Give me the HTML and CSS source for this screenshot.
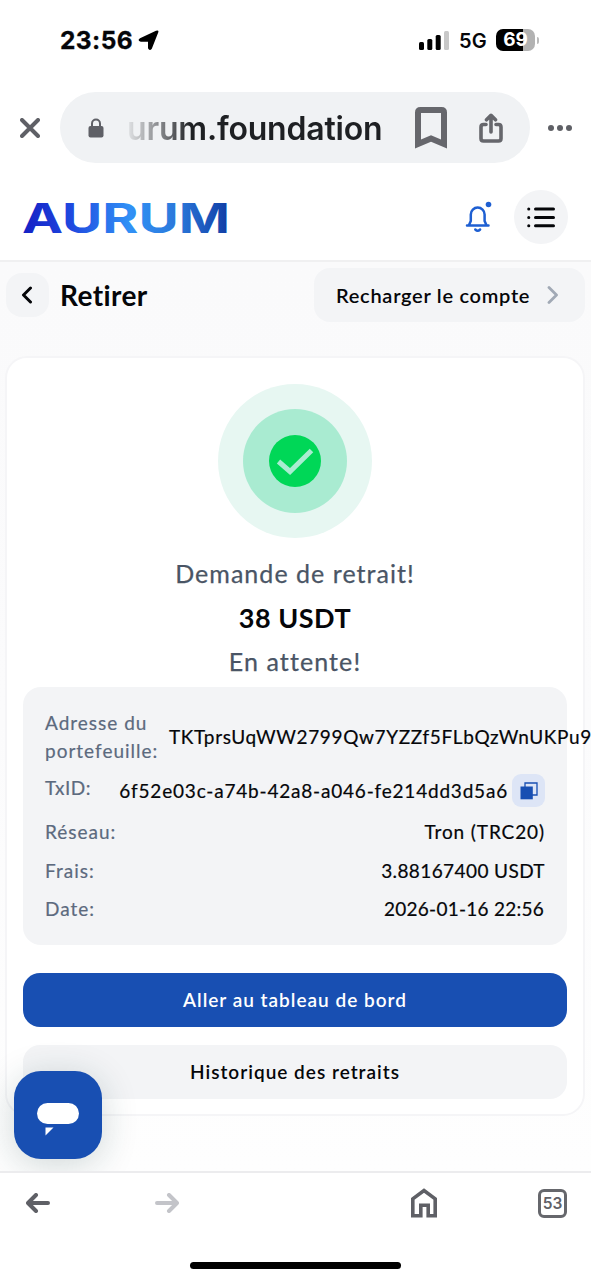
FILE: index.html
```html
<!DOCTYPE html>
<html lang="fr">
<head>
<meta charset="utf-8">
<meta name="viewport" content="width=device-width, initial-scale=1">
<title>Retirer</title>
<link rel="stylesheet" href="styles.css">
</head>
<body>
<div class="status">
  <div class="status-left">
    <span class="clock">23:56</span>
    <svg width="21" height="21" viewBox="0 0 21 21"><path d="M2 8.200 18 .8Q21.200 -.2 20.200 2.600L13.800 18.800Q11.500 21.500 10 18.200V11.800H2.800Q-1.200 10.600 2 8.200Z"/></svg>
  </div>
  <div class="status-right">
    <svg class="signal" width="30" height="19" viewBox="0 0 30 19"><rect x="0" y="11" width="5" height="8" rx="1.500"/><rect x="8.300" y="8" width="5" height="11" rx="1.500"/><rect x="16.700" y="4" width="5" height="15" rx="1.500"/><rect x="25" y="0" width="5" height="19" rx="1.500" fill="#c8c8c8"/></svg>
    <span class="net">5G</span>
    <span class="battery">69</span><span class="battery-tip"></span>
  </div>
</div>

<div class="browser">
  <svg class="close" width="20" height="20" viewBox="0 0 20 20"><path d="M2 2 18 18M18 2 2 18"/></svg>
  <div class="address">
    <svg class="lock" width="16" height="20" viewBox="0 0 16 20"><rect x=".5" y="8" width="15" height="11.500" rx="2"/><path d="M4 9V5.500a4 4 0 0 1 8 0V9" fill="none" stroke="#5f6066" stroke-width="2"/></svg>
    <span class="url">urum.foundation</span>
    <svg class="bookmark" width="32" height="42" viewBox="0 0 32 42"><path d="M3 37V5.500Q3 3 5.500 3h21Q29 3 29 5.500V37L16 31.500Z"/></svg>
    <svg class="share" width="24" height="30" viewBox="0 0 24 30"><path d="M7 11.500H4.500Q2 11.500 2 14v11.500Q2 28 4.500 28h15q2.500 0 2.500-2.500V14q0-2.500-2.500-2.500H17M12 19V3M7.500 6.800 12 2.300l4.500 4.500"/></svg>
  </div>
  <span class="more"><i></i><i></i><i></i></span>
</div>

<header class="header">
  <svg class="logo" width="210" height="54" viewBox="0 0 210 54" role="img">
    <defs><linearGradient id="brand" x1="0" x2="1" y1="0" y2="0"><stop offset="0" stop-color="#1420c4"/><stop offset=".22" stop-color="#1e45de"/><stop offset=".52" stop-color="#3191f6"/><stop offset=".75" stop-color="#2b78da"/><stop offset="1" stop-color="#103ca4"/></linearGradient></defs>
    <text x="0" y="42.500" textLength="208" lengthAdjust="spacingAndGlyphs" fill="url(#brand)">AURUM</text>
  </svg>
  <svg class="bell" width="30" height="34" viewBox="0 0 30 34"><path d="M3 25.500h21.500M5 25l1.800-4v-6.500a6.900 6.900 0 0 1 13.800 0V21l1.800 4M11.300 29.500q2.400 2.400 4.800 0"/><circle cx="24.500" cy="4.500" r="2.800"/></svg>
  <span class="menu"><svg width="28" height="21" viewBox="0 0 28 21"><path d="M8.500 2H26.500M8.500 10.500H26.500M8.500 18.700H26.500M1.700 2h.1M1.700 10.500h.1M1.700 18.700h.1"/></svg></span>
</header>

<main class="page">
  <div class="title-row">
    <span class="back"><svg width="12" height="18" viewBox="0 0 12 18"><path d="M9.500 2 2.500 9l7 7"/></svg></span>
    <h1 class="title">Retirer</h1>
    <a class="topup"><span>Recharger le compte</span><svg width="12" height="18" viewBox="0 0 12 18"><path d="M2 1.500 9.500 9 2 16.500"/></svg></a>
  </div>

  <section class="card">
    <div class="halo"><div class="ring"><svg width="52" height="52" viewBox="0 0 52 52"><circle cx="26" cy="26" r="26" fill="#00d757"/><path d="M9.500 26.500 21 36.500 42.500 15.500" fill="none" stroke="#a9ecd1" stroke-width="5"/></svg></div></div>
    <p class="lead request">Demande de retrait!</p>
    <p class="amount">38 USDT</p>
    <p class="lead pending">En attente!</p>
    <dl class="details">
      <div class="row wallet"><dt>Adresse du portefeuille:</dt><dd>TKTprsUqWW2799Qw7YZZf5FLbQzWnUKPu9</dd></div>
      <div class="row tx"><dt>TxID:</dt><dd>6f52e03c-a74b-42a8-a046-fe214dd3d5a6</dd><span class="copy"><svg width="18" height="18" viewBox="0 0 18 18"><path d="M5 1h12v12H5Z" fill="none" stroke="#184fb2" stroke-width="1.300"/><path d="M.5 4.500h12.300v12.800H.5Z" fill="#184fb2"/></svg></span></div>
      <div class="row"><dt>Réseau:</dt><dd class="network">Tron (TRC20)</dd></div>
      <div class="row"><dt>Frais:</dt><dd class="fee">3.88167400 USDT</dd></div>
      <div class="row"><dt>Date:</dt><dd class="date">2026-01-16 22:56</dd></div>
    </dl>
    <a class="button primary">Aller au tableau de bord</a>
    <a class="button secondary">Historique des retraits</a>
  </section>
  <div class="chat"><svg width="42" height="34" viewBox="0 0 42 34"><rect width="42" height="21" rx="10.500"/><path d="M8.500 24.500h8l-8 8Z"/></svg></div>
</main>

<nav class="toolbar">
  <div class="tools">
    <svg class="arrow" width="24" height="20" viewBox="0 0 24 20"><path d="M22 10H3M10 2 2 10l8 8"/></svg>
    <svg class="arrow forward" width="24" height="20" viewBox="0 0 24 20"><path d="M2 10h19M14 2l8 8-8 8"/></svg>
    <svg class="home" width="26" height="30" viewBox="0 0 26 30"><path d="M1.800 27.700V10.800L13 2.500l11.200 8.300v16.900h-7v-10.400H9.800v10.400Z"/></svg>
    <span class="tabs">53</span>
  </div>
  <div class="home-indicator"></div>
</nav>
</body>
</html>
```
FILE: styles.css
```css
* { box-sizing: border-box; }
html, body { margin: 0; overflow: hidden; }
body { width: 591px; height: 1280px; background: #fff; font-family: Lato, "Noto Sans", sans-serif; color: #050609; display: flex; flex-direction: column; }
svg { display: block; flex: none; }
p, h1, dl, dd { margin: 0; }

.status { height: 92px; padding: 0 52px 12px 60px; display: flex; justify-content: space-between; align-items: center; font-family: Inter, sans-serif; }
.status-left, .status-right { display: flex; align-items: center; }
.clock { font-size: 24.500px; font-weight: 700; width: 78px; letter-spacing: .4px; white-space: nowrap; -webkit-text-stroke: .3px; }
.net { font-size: 20px; font-weight: 600; margin: 1px 9px 0 10px; width: 28px; letter-spacing: .2px; }
.battery { width: 39px; height: 22px; border-radius: 7px; background: linear-gradient(90deg, #000 69%, #b2b2b2 69%); color: #fff; font-size: 19px; font-weight: 700; line-height: 22px; text-align: center; }
.battery-tip { width: 2px; height: 7px; margin-left: 2px; border-radius: 0 3px 3px 0; background: #bbb; }

.browser { height: 71px; display: flex; align-items: center; padding: 0 18px 0 20px; }
.close { fill: none; stroke: #5f6066; stroke-width: 4; stroke-linecap: round; }
.address { width: 470px; height: 71px; margin-left: 20px; padding: 0 27px 0 28px; border-radius: 36px; background: #f0f2f4; display: flex; align-items: center; }
.lock { fill: #5f6066; }
.url { margin-left: 23px; padding-top: 1px; width: 257px; font: 600 32px Inter, sans-serif; letter-spacing: -.2px; white-space: nowrap; background: linear-gradient(90deg, #e2e4e6 0, #77797c 38px, #1e2023 64px); -webkit-background-clip: text; background-clip: text; color: transparent; }
.bookmark { margin-left: 31px; fill: none; stroke: #66676c; stroke-width: 6; }
.share { margin-left: 32px; fill: none; stroke: #66676c; stroke-width: 3.600; stroke-linecap: round; stroke-linejoin: round; }
.more { margin-left: 18px; display: flex; gap: 3px; }
.more i { width: 6px; height: 6px; border-radius: 50%; background: #5f6066; }

.header { height: 99px; padding: 11px 23px 0 22px; border-bottom: 2px solid #f0f0f1; display: flex; align-items: center; }
.logo { overflow: visible; }
.logo text { font: 700 41px Inter, sans-serif; }
.bell { margin-left: 232px; fill: none; stroke: #1e5fd2; stroke-width: 2.500; stroke-linecap: round; stroke-linejoin: round; }
.bell circle { fill: #1e5fd2; stroke: none; }
.menu { width: 54px; height: 54px; margin-left: 20px; border-radius: 50%; background: #f3f4f6; display: grid; place-items: center; }
.menu path { fill: none; stroke: #050609; stroke-width: 3; stroke-linecap: round; }

.page { height: 909px; flex: none; position: relative; overflow: hidden; padding: 6px 6px 0; background: linear-gradient(#fafafb 0, #fbfbfc 50%, #fefefe 100%); }
.title-row { height: 54px; display: flex; align-items: center; }
.back { width: 43px; height: 44px; border-radius: 16px; background: #f3f4f6; display: grid; place-items: center; }
.back svg { margin-right: 2px; }
.back path { fill: none; stroke: #050609; stroke-width: 3; stroke-linecap: round; stroke-linejoin: round; }
.title { margin-left: 11px; font-size: 28px; line-height: 32px; font-weight: 700; letter-spacing: .4px; }
.topup { margin-left: auto; width: 271px; height: 54px; border-radius: 16px; padding: 0 26px 0 22px; background: #f3f4f6; display: flex; align-items: center; justify-content: space-between; font-size: 20px; font-weight: 600; letter-spacing: .72px; white-space: nowrap; }
.topup path { fill: none; stroke: #a1a9b5; stroke-width: 2.800; stroke-linecap: round; stroke-linejoin: round; }

.card { width: 580px; height: 760px; margin: 34px 0 0 -1px; border: 2px solid #f5f5f7; border-radius: 22px; background: #fff; padding: 26px 16px 0 16px; display: flex; flex-direction: column; }
.halo { align-self: center; flex: none; width: 154px; height: 154px; border-radius: 50%; background: #e7f7f2; display: grid; place-items: center; }
.ring { width: 104px; height: 104px; border-radius: 50%; background: #a9ebd1; display: grid; place-items: center; }
.lead { font-size: 25px; line-height: 36px; text-align: center; color: #4a5565; letter-spacing: 1.040px; white-space: nowrap; -webkit-text-stroke: .25px; }
.request { margin-top: 17px; }
.amount { margin-top: 9px; font-size: 27px; line-height: 36px; font-weight: 700; letter-spacing: .5px; text-align: center; }
.pending { margin-top: 7px; letter-spacing: 1.100px; }
.details { flex: none; height: 258px; margin-top: 8px; padding: 22px; border-radius: 18px; background: #f3f4f6; font-size: 19px; line-height: 28px; letter-spacing: .8px; display: flex; flex-direction: column; gap: 11px; -webkit-text-stroke: .2px; }
.row { display: flex; justify-content: space-between; white-space: nowrap; height: 27.500px; flex: none; }
dt { color: #5c6a7e; letter-spacing: 1px; }
.wallet { height: 55px; align-items: center; }
.wallet dt { width: 124px; flex: none; white-space: normal; }
.wallet dd { letter-spacing: .64px; }
.tx { height: 33px; margin-top: -1px; }
.tx dt { letter-spacing: .5px; }
.tx dd { margin-left: auto; padding-top: 3px; }
.copy { margin-left: 4px; width: 33px; height: 33px; flex: none; border-radius: 9px; background: #dde5f6; display: grid; place-items: center; }
.network { letter-spacing: .9px; }
.fee { letter-spacing: .4px; }
.date { letter-spacing: .25px; padding-right: 1px; }
.button { flex: none; height: 54px; border-radius: 17px; font-size: 19px; font-weight: 600; line-height: 54px; letter-spacing: 1px; text-align: center; white-space: nowrap; }
.primary { margin-top: 28px; background: #184fb2; color: #fff; }
.secondary { margin-top: 18px; background: #f3f4f6; }
.chat { position: absolute; left: 14px; top: 809px; width: 88px; height: 88px; border-radius: 27px; background: #184fb2; box-shadow: 0 6px 36px rgba(20, 60, 60, .2); display: grid; place-items: center; padding-top: 9px; }
.chat svg { fill: #fff; }

.toolbar { height: 109px; flex: none; padding-top: 11px; border-top: 2px solid #ececee; background: #fff; }
.tools { height: 38px; padding: 0 24px 0 26px; display: flex; align-items: center; }
.arrow { fill: none; stroke: #5f6066; stroke-width: 4; stroke-linecap: round; stroke-linejoin: round; }
.forward { margin-left: 105px; stroke: #c3c4c9; }
.home { margin-left: 232px; fill: none; stroke: #5f6066; stroke-width: 3.600; }
.tabs { width: 29px; height: 29px; margin-left: auto; border: 3px solid #66676c; border-radius: 6px; font: 600 15.500px/23px Inter, sans-serif; color: #5f6066; text-align: center; }
.home-indicator { width: 211px; height: 7px; margin: 40px auto 0; border-radius: 4px; background: #000; }
```
